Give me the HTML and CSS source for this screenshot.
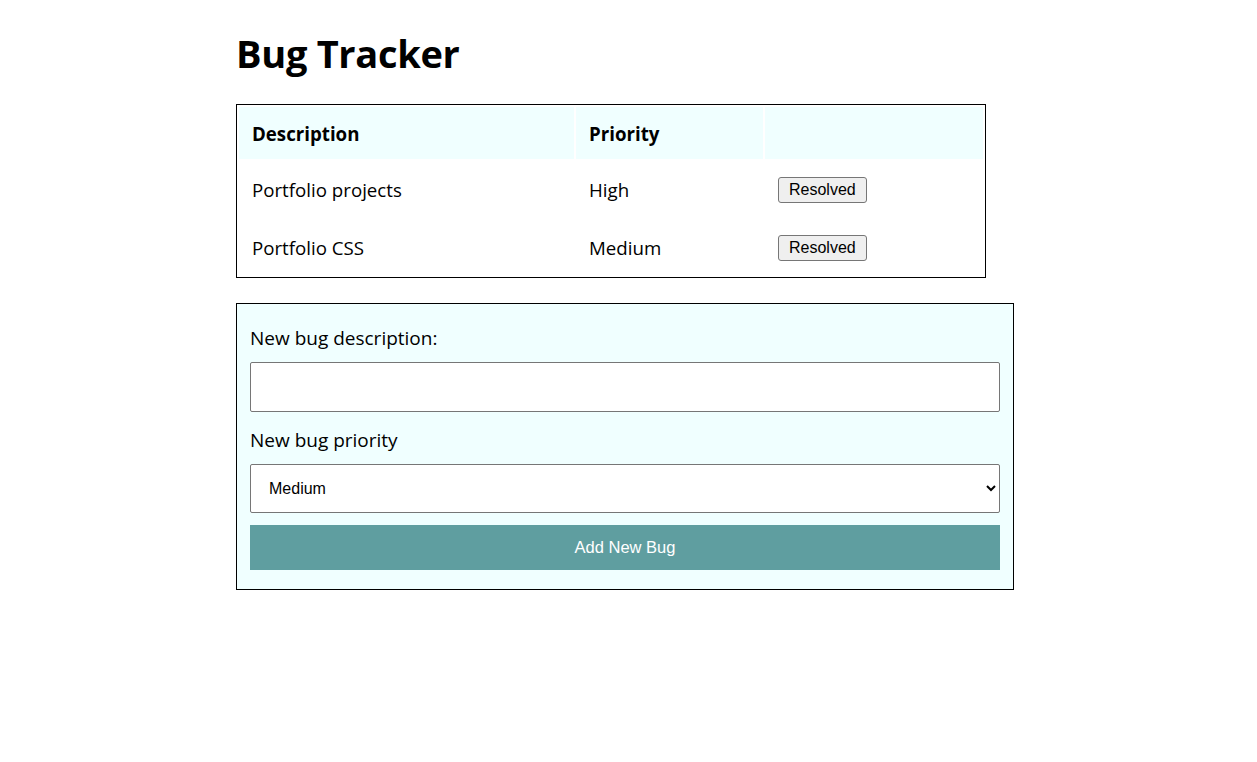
FILE: index.html
```html
<!DOCTYPE html>
<html lang="en">
<head>
<meta charset="utf-8">
<title>Bug Tracker</title>
<link rel="stylesheet" href="styles.css">
</head>
<body>
<main class="app">
  <h1 class="title">Bug Tracker</h1>
  <table class="bugs">
    <thead>
      <tr>
        <th class="col-desc">Description</th>
        <th class="col-prio">Priority</th>
        <th class="col-act"></th>
      </tr>
    </thead>
    <tbody>
      <tr>
        <td>Portfolio projects</td>
        <td>High</td>
        <td><button class="resolve" type="button">Resolved</button></td>
      </tr>
      <tr>
        <td>Portfolio CSS</td>
        <td>Medium</td>
        <td><button class="resolve" type="button">Resolved</button></td>
      </tr>
    </tbody>
  </table>
  <form class="new-bug">
    <label class="field-label" for="desc">New bug description:</label>
    <input class="text-input" id="desc" type="text">
    <label class="field-label field-label-2" for="prio">New bug priority</label>
    <select class="select-input" id="prio">
      <option>Low</option>
      <option selected>Medium</option>
      <option>High</option>
    </select>
    <button class="add-btn" type="button">Add New Bug</button>
  </form>
</main>
</body>
</html>
```

FILE: styles.css
```css
body {
  margin: 8px;
  font-family: "Open Sans", "Noto Sans", sans-serif;
  color: #000;
  background: #fff;
}

.app {
  width: 778px;
  margin-left: 228px;
}

.title {
  font-size: 38px;
  font-weight: 700;
  margin: 21px 0 27px 0;
  line-height: 48px;
  letter-spacing: -0.3px;
}

.bugs {
  width: 750px;
  border: 1px solid #000;
  border-spacing: 2px;
  table-layout: fixed;
  font-size: 18.7px;
  margin-bottom: 25px;
}

.bugs th,
.bugs td {
  text-align: left;
  padding: 0 13px;
  box-sizing: border-box;
}

.bugs th {
  background: #f0ffff;
  font-weight: 700;
  height: 52px;
}

.bugs td {
  height: 56px;
}

.col-desc { width: 335px; }
.col-prio { width: 187px; }

.resolve {
  font-family: Arial, "Liberation Sans", sans-serif;
  font-size: 16px;
  padding: 1px 10px;
  background: #efefef;
  border: 1px solid #767676;
  border-radius: 3px;
  color: #000;
  height: 26px;
  margin-top: 2px;
}

.new-bug {
  display: flex;
  flex-direction: column;
  background: #f0ffff;
  border: 1px solid #000;
  padding: 22px 13px 19px 13px;
}

.field-label {
  font-size: 19px;
  line-height: 25px;
  margin-bottom: 11px;
}

.field-label-2 {
  margin-top: 16px;
}

.text-input {
  height: 50px;
  box-sizing: border-box;
  border: 1px solid #767676;
  border-radius: 2px;
  background: #fff;
  margin: 0;
}

.select-input {
  height: 49px;
  box-sizing: border-box;
  border: 1px solid #767676;
  border-radius: 2px;
  background: #fff;
  font-family: Arial, "Liberation Sans", sans-serif;
  font-size: 16px;
  padding: 0 10px 0 14px;
  margin: 0 0 12px 0;
  color: #000;
}

.add-btn {
  height: 45px;
  background: #5f9ea0;
  color: #fff;
  border: none;
  font-family: Arial, "Liberation Sans", sans-serif;
  font-size: 16.5px;
  cursor: pointer;
}
```
